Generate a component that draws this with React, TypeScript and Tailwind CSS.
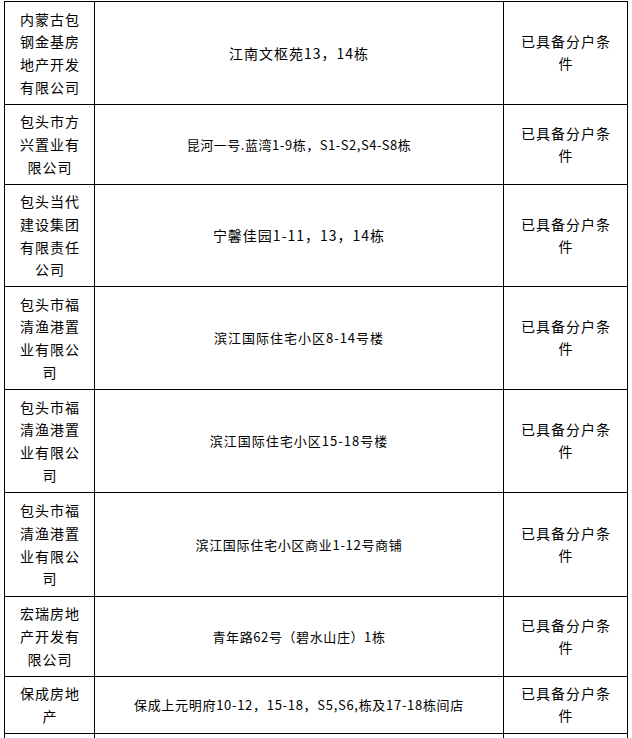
import React from "react";

type Row = {
  name: string[];
  addr: string;
  addrCls: string;
  h: string;
};

const rows: Row[] = [
  { name: ["内蒙古包", "钢金基房", "地产开发", "有限公司"], addr: "江南文枢苑13，14栋", addrCls: "text-[14px] tracking-[1px]", h: "h-[103px]" },
  { name: ["包头市方", "兴置业有", "限公司"], addr: "昆河一号.蓝湾1-9栋，S1-S2,S4-S8栋", addrCls: "text-[13px] tracking-[0.55px]", h: "h-[80px]" },
  { name: ["包头当代", "建设集团", "有限责任", "公司"], addr: "宁馨佳园1-11，13，14栋", addrCls: "text-[14px] tracking-[1px]", h: "h-[102px]" },
  { name: ["包头市福", "清渔港置", "业有限公", "司"], addr: "滨江国际住宅小区8-14号楼", addrCls: "text-[13px] tracking-[1px]", h: "h-[103px]" },
  { name: ["包头市福", "清渔港置", "业有限公", "司"], addr: "滨江国际住宅小区15-18号楼", addrCls: "text-[13px] tracking-[1px]", h: "h-[103px]" },
  { name: ["包头市福", "清渔港置", "业有限公", "司"], addr: "滨江国际住宅小区商业1-12号商铺", addrCls: "text-[13px] tracking-[0.7px]", h: "h-[104px]" },
  { name: ["宏瑞房地", "产开发有", "限公司"], addr: "青年路62号（碧水山庄）1栋", addrCls: "text-[13px] tracking-[0.6px]", h: "h-[80px]" },
  { name: ["保成房地", "产"], addr: "保成上元明府10-12，15-18，S5,S6,栋及17-18栋间店", addrCls: "text-[13px] tracking-[0.7px]", h: "h-[57px]" },
];

export default function App() {
  return (
    <div
      className="w-[632px] h-[738px] overflow-hidden bg-white pt-[1px] pl-[4px] text-black"
      style={{ fontFamily: '"Noto Sans CJK SC", "Noto Sans", sans-serif' }}
    >
      <div className="w-[624px] border-t border-l border-black">
        {rows.map((r, i) => (
          <div key={i} className={`flex border-b border-black ${r.h}`}>
            <div className="w-[90px] shrink-0 border-r border-black flex flex-col items-center justify-center text-[14px] leading-[22.7px] tracking-[1px]">
              {r.name.map((l, j) => (
                <div key={j} className="whitespace-nowrap pl-[1px]">{l}</div>
              ))}
            </div>
            <div className="w-[409px] shrink-0 border-r border-black flex items-center justify-center">
              <span className={`whitespace-nowrap ${r.addrCls}`}>{r.addr}</span>
            </div>
            <div className="w-[124px] shrink-0 border-r border-black flex flex-col items-center justify-center text-[14px] leading-[21.7px] tracking-[1px]">
              <div className="whitespace-nowrap pl-[1px]">已具备分户条</div>
              <div className="whitespace-nowrap pl-[1px]">件</div>
            </div>
          </div>
        ))}
        <div className="flex h-[80px] border-b border-black">
          <div className="w-[90px] shrink-0 border-r border-black" />
          <div className="w-[409px] shrink-0 border-r border-black" />
          <div className="w-[124px] shrink-0 border-r border-black" />
        </div>
      </div>
    </div>
  );
}
